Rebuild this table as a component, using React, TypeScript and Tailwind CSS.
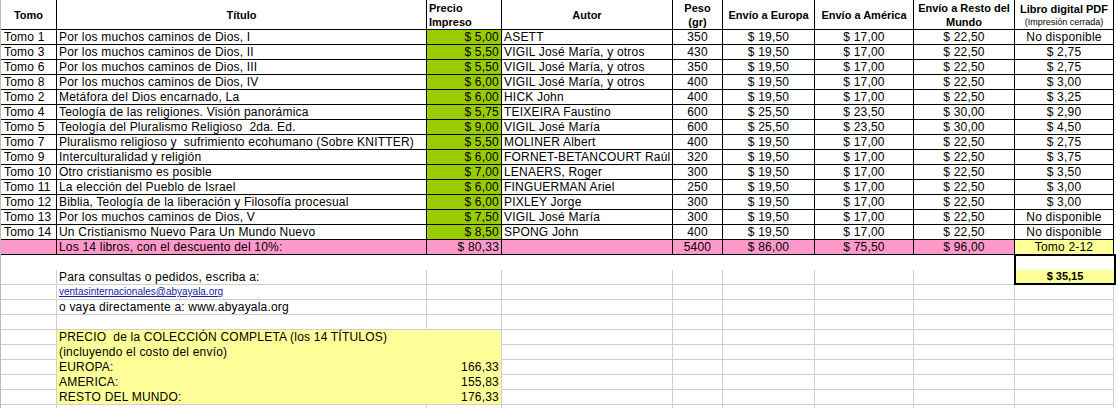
import type { ReactNode } from 'react';

const COLS = 'grid grid-cols-[56px_370px_75px_171px_50px_92px_99px_101px_99px]';

type Libro = {
  tomo: string;
  titulo: string;
  precio: string;
  autor: string;
  peso: string;
  europa: string;
  america: string;
  resto: string;
  pdf: string;
};

const corto = { europa: '$ 19,50', america: '$ 17,00', resto: '$ 22,50' };
const largo = { europa: '$ 25,50', america: '$ 23,50', resto: '$ 30,00' };

const libros: Libro[] = [
  { tomo: 'Tomo 1', titulo: 'Por los muchos caminos de Dios, I', precio: '$ 5,00', autor: 'ASETT', peso: '350', ...corto, pdf: 'No disponible' },
  { tomo: 'Tomo 3', titulo: 'Por los muchos caminos de Dios, II', precio: '$ 5,50', autor: 'VIGIL José María, y otros', peso: '430', ...corto, pdf: '$ 2,75' },
  { tomo: 'Tomo 6', titulo: 'Por los muchos caminos de Dios, III', precio: '$ 5,50', autor: 'VIGIL José María, y otros', peso: '350', ...corto, pdf: '$ 2,75' },
  { tomo: 'Tomo 8', titulo: 'Por los muchos caminos de Dios, IV', precio: '$ 6,00', autor: 'VIGIL José María, y otros', peso: '400', ...corto, pdf: '$ 3,00' },
  { tomo: 'Tomo 2', titulo: 'Metáfora del Dios encarnado, La', precio: '$ 6,00', autor: 'HICK John', peso: '400', ...corto, pdf: '$ 3,25' },
  { tomo: 'Tomo 4', titulo: 'Teología de las religiones. Visión panorámica', precio: '$ 5,75', autor: 'TEIXEIRA Faustino', peso: '600', ...largo, pdf: '$ 2,90' },
  { tomo: 'Tomo 5', titulo: 'Teología del Pluralismo Religioso  2da. Ed.', precio: '$ 9,00', autor: 'VIGIL José María', peso: '600', ...largo, pdf: '$ 4,50' },
  { tomo: 'Tomo 7', titulo: 'Pluralismo religioso y  sufrimiento ecohumano (Sobre KNITTER)', precio: '$ 5,50', autor: 'MOLINER Albert', peso: '400', ...corto, pdf: '$ 2,75' },
  { tomo: 'Tomo 9', titulo: 'Interculturalidad y religión', precio: '$ 6,00', autor: 'FORNET-BETANCOURT Raúl', peso: '320', ...corto, pdf: '$ 3,75' },
  { tomo: 'Tomo 10', titulo: 'Otro cristianismo es posible', precio: '$ 7,00', autor: 'LENAERS, Roger', peso: '300', ...corto, pdf: '$ 3,50' },
  { tomo: 'Tomo 11', titulo: 'La elección del Pueblo de Israel', precio: '$ 6,00', autor: 'FINGUERMAN Ariel', peso: '250', ...corto, pdf: '$ 3,00' },
  { tomo: 'Tomo 12', titulo: 'Biblia, Teología de la liberación y Filosofía procesual', precio: '$ 6,00', autor: 'PIXLEY Jorge', peso: '300', ...corto, pdf: '$ 3,00' },
  { tomo: 'Tomo 13', titulo: 'Por los muchos caminos de Dios, V', precio: '$ 7,50', autor: 'VIGIL José María', peso: '300', ...corto, pdf: 'No disponible' },
  { tomo: 'Tomo 14', titulo: 'Un Cristianismo Nuevo Para Un Mundo Nuevo', precio: '$ 8,50', autor: 'SPONG John', peso: '400', ...corto, pdf: 'No disponible' },
];

// black-ruled cell of the price table
function Cell({ children, className = '' }: { children?: ReactNode; className?: string }) {
  return (
    <div className={`h-[15px] border-r border-b border-black leading-[14px] tracking-[0.2px] whitespace-pre overflow-hidden ${className}`}>
      {children}
    </div>
  );
}

// plain sheet cell below the table, light gridlines
function Grid({ children, className = '' }: { children?: ReactNode; className?: string }) {
  return (
    <div className={`h-[15px] border-r border-b border-[#cfcfcf] leading-[14px] tracking-[0.2px] whitespace-pre ${className}`}>
      {children}
    </div>
  );
}

function Head({ children, className = '' }: { children?: ReactNode; className?: string }) {
  return (
    <div className={`h-[30px] border-r border-b border-black flex flex-col justify-center text-[11px] font-bold leading-[14px] ${className}`}>
      {children}
    </div>
  );
}

function EmptyCols({ count }: { count: number }) {
  return (
    <>
      {Array.from({ length: count }).map((_, i) => (
        <Grid key={i} />
      ))}
    </>
  );
}

export default function App() {
  return (
    <div className="h-[408px] w-[1116px] overflow-hidden bg-white text-[12px] text-black font-['Liberation_Sans',Arial,sans-serif]">
      <div className="w-[1114px] border-l border-[#bdbdbd]">
        {/* header */}
        <div className={COLS}>
          <Head className="items-center">Tomo</Head>
          <Head className="items-center">Título</Head>
          <Head className="pl-[2px]">
            <span>Precio</span>
            <span>Impreso</span>
          </Head>
          <Head className="items-center">Autor</Head>
          <Head className="items-center">
            <span>Peso</span>
            <span>(gr)</span>
          </Head>
          <Head className="items-center">Envío a Europa</Head>
          <Head className="items-center">Envío a América</Head>
          <Head className="items-center">
            <span>Envío a Resto del</span>
            <span>Mundo</span>
          </Head>
          <Head className="items-center">
            <span>Libro digital PDF</span>
            <span className="text-[9px] font-normal leading-[12px]">(Impresión cerrada)</span>
          </Head>
        </div>

        {/* books */}
        {libros.map((l) => (
          <div key={l.tomo} className={COLS}>
            <Cell className="pl-[3px]">{l.tomo}</Cell>
            <Cell className="pl-[2px]">{l.titulo}</Cell>
            <Cell className="bg-[#99cc00] text-right pr-[2px]">{l.precio}</Cell>
            <Cell className="pl-[2px]">{l.autor}</Cell>
            <Cell className="text-center">{l.peso}</Cell>
            <Cell className="text-center">{l.europa}</Cell>
            <Cell className="text-center">{l.america}</Cell>
            <Cell className="text-center">{l.resto}</Cell>
            <Cell className="text-center">{l.pdf}</Cell>
          </div>
        ))}

        {/* totals */}
        <div className={COLS}>
          <Cell className="bg-[#ff99cc]" />
          <Cell className="bg-[#ff99cc] pl-[2px]">Los 14 libros, con el descuento del 10%:</Cell>
          <Cell className="bg-[#ff99cc] text-right pr-[2px]">$ 80,33</Cell>
          <Cell className="bg-[#ff99cc]" />
          <Cell className="bg-[#ff99cc] text-center">5400</Cell>
          <Cell className="bg-[#ff99cc] text-center">$ 86,00</Cell>
          <Cell className="bg-[#ff99cc] text-center">$ 75,50</Cell>
          <Cell className="bg-[#ff99cc] text-center">$ 96,00</Cell>
          <Cell className="bg-[#ffff99] text-center">Tomo 2-12</Cell>
        </div>

        {/* below the table; last column holds the boxed PDF bundle price */}
        <div className={COLS}>
          {Array.from({ length: 8 }).map((_, i) => (
            <div key={i} className="h-[15px]" />
          ))}
          <div className="-mt-px -ml-px -mr-[2px] h-[16px] border-x-2 border-t-2 border-black bg-white" />
        </div>
        <div className={COLS}>
          <Grid />
          <Grid className="pl-[2px]">Para consultas o pedidos, escriba a:</Grid>
          <EmptyCols count={6} />
          <div className="h-[15px] -ml-px -mr-[2px] border-x-2 border-b-2 border-black bg-[#ffff99] text-center font-bold text-[11px] leading-[13px]">
            $ 35,15
          </div>
        </div>
        <div className={COLS}>
          <Grid />
          <Grid className="pl-[2px] text-[10px] text-[#1a1aa6] underline leading-[13px] tracking-normal">
            ventasinternacionales@abyayala.org
          </Grid>
          <EmptyCols count={7} />
        </div>
        <div className={COLS}>
          <Grid />
          <Grid className="pl-[2px]">o vaya directamente a: www.abyayala.org</Grid>
          <EmptyCols count={7} />
        </div>
        <div className={COLS}>
          <EmptyCols count={9} />
        </div>
        {[
          ['PRECIO  de la COLECCIÓN COMPLETA (los 14 TÍTULOS)', ''],
          ['(incluyendo el costo del envío)', ''],
          ['EUROPA:', '166,33'],
          ['AMERICA:', '155,83'],
          ['RESTO DEL MUNDO:', '176,33'],
        ].map(([label, valor], i) => (
          <div key={label} className={COLS}>
            <Grid />
            <div
              className={`col-span-2 h-[15px] flex justify-between px-[2px] bg-[#ffff99] border-r border-[#cfcfcf] leading-[14px] tracking-[0.2px] whitespace-pre ${
                i === 4 ? 'border-b' : 'border-b border-b-[#ffff99]'
              }`}
            >
              <span>{label}</span>
              <span>{valor}</span>
            </div>
            <EmptyCols count={6} />
          </div>
        ))}
        <div className={COLS}>
          <EmptyCols count={9} />
        </div>
      </div>
    </div>
  );
}
